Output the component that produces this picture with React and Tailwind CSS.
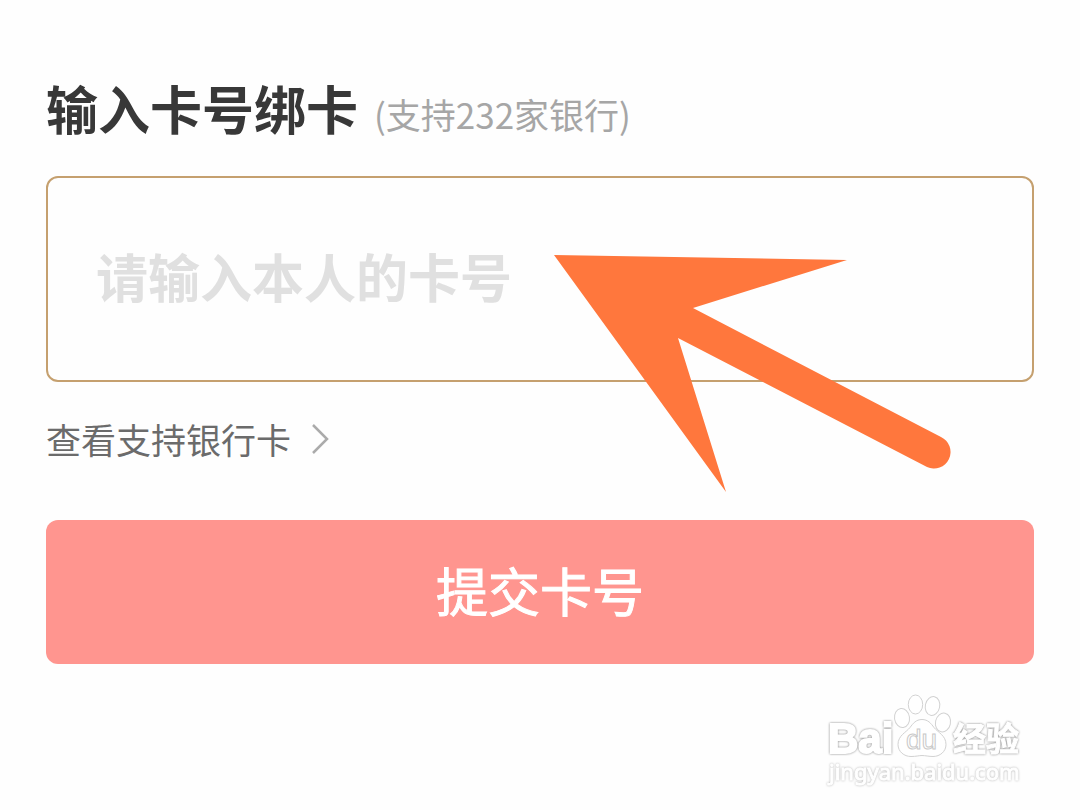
function Arrow() {
  return (
    <svg
      className="pointer-events-none absolute left-[508px] top-[79px] h-[238px] w-[398px]"
      viewBox="0 0 398 238"
      fill="none"
      aria-hidden="true"
    >
      <path d="M0 0 293 5 139 53 387 182A16 16 0 0 1 373 212L124 83 172 237Z" fill="#ff773d" />
    </svg>
  );
}

function Watermark() {
  return (
    <svg
      className="h-[98px] w-[200px]"
      viewBox="825 692 200 98"
      fill="#ffffff"
      stroke="#d2d2d2"
      strokeWidth="1"
      role="img"
      aria-label="Baidu 经验 jingyan.baidu.com"
    >
      <text
        x="828"
        y="753"
        fontSize="42"
        stroke="#ffffff"
        strokeWidth="2"
        className="font-['Liberation_Sans',sans-serif] font-bold [filter:drop-shadow(0_0_1px_#858585)]"
      >
        Bai
      </text>
      <ellipse cx="902" cy="718" rx="7.5" ry="9.5" transform="rotate(-8 902 718)" />
      <ellipse cx="915.5" cy="704.5" rx="7.2" ry="9.5" />
      <ellipse cx="932.5" cy="706" rx="7.2" ry="9.5" transform="rotate(12 932.5 706)" />
      <ellipse cx="943" cy="722.5" rx="7.5" ry="9.5" transform="rotate(12 943 722.5)" />
      <path d="M922 719.5c-6 0-9 4-12 8-4 5-12 8-12 17 0 7 6 12 13 12 5 0 8-1 11-1s7 1 11 1c7 0 13-5 13-12 0-9-8-12-12-17-3-4-6-8-12-8Z" />
      <text
        x="906"
        y="749"
        fontSize="28"
        stroke="#c8c8c8"
        className="font-['Liberation_Sans',sans-serif]"
      >
        du
      </text>
      <text
        x="953"
        y="751"
        fontSize="33"
        stroke="#ffffff"
        strokeWidth="1"
        className="font-['Noto_Sans_CJK_SC',sans-serif] font-bold [filter:drop-shadow(0_0_1px_#858585)]"
      >
        经验
      </text>
      <text
        x="829"
        y="780"
        fontSize="22"
        stroke="#ffffff"
        strokeWidth="1"
        className="font-['Noto_Sans',sans-serif] [filter:drop-shadow(0_0_1px_#b4b4b4)]"
      >
        jingyan.baidu.com
      </text>
    </svg>
  );
}

export default function App() {
  return (
    <main className="flex min-h-screen flex-col bg-[#fefefe] px-[46px] pt-[72px] font-['Noto_Sans_CJK_SC',sans-serif]">
      <form className="flex flex-col" onSubmit={(e) => e.preventDefault()}>
        <label htmlFor="card" className="flex items-center gap-4 whitespace-nowrap leading-[60px]">
          <span className="text-[52px] font-bold text-[#383838]">输入卡号绑卡</span>
          <span className="pt-3 text-[35px] text-[#a6a6a6]">(支持232家银行)</span>
        </label>

        <div className="relative mt-8">
          <input
            id="card"
            type="text"
            inputMode="numeric"
            placeholder="请输入本人的卡号"
            className="block h-[206px] w-full rounded-xl border-2 border-[#c5a06f] bg-transparent px-12 pb-2 text-[52px] font-bold text-[#383838] outline-none placeholder:text-[#e0e0e0] placeholder:opacity-100"
          />
          <Arrow />
        </div>

        <a href="#banks" className="mt-8 flex items-center gap-5 self-start text-[35px] leading-[50px] text-[#6b6b6b]">
          查看支持银行卡
          <svg className="h-8 w-5" viewBox="0 0 20 32" fill="none" stroke="#ababab" strokeWidth="2.5" aria-hidden="true">
            <path d="M2 2 16 16 2 30" />
          </svg>
        </a>

        <button
          type="submit"
          className="mt-14 h-36 w-full rounded-xl bg-[#ff958f] pb-1 text-[52px] font-normal text-white [-webkit-text-stroke:1px_#ffffff]"
        >
          提交卡号
        </button>
      </form>

      <footer className="mt-7 flex justify-end pr-[9px]">
        <Watermark />
      </footer>
    </main>
  );
}
